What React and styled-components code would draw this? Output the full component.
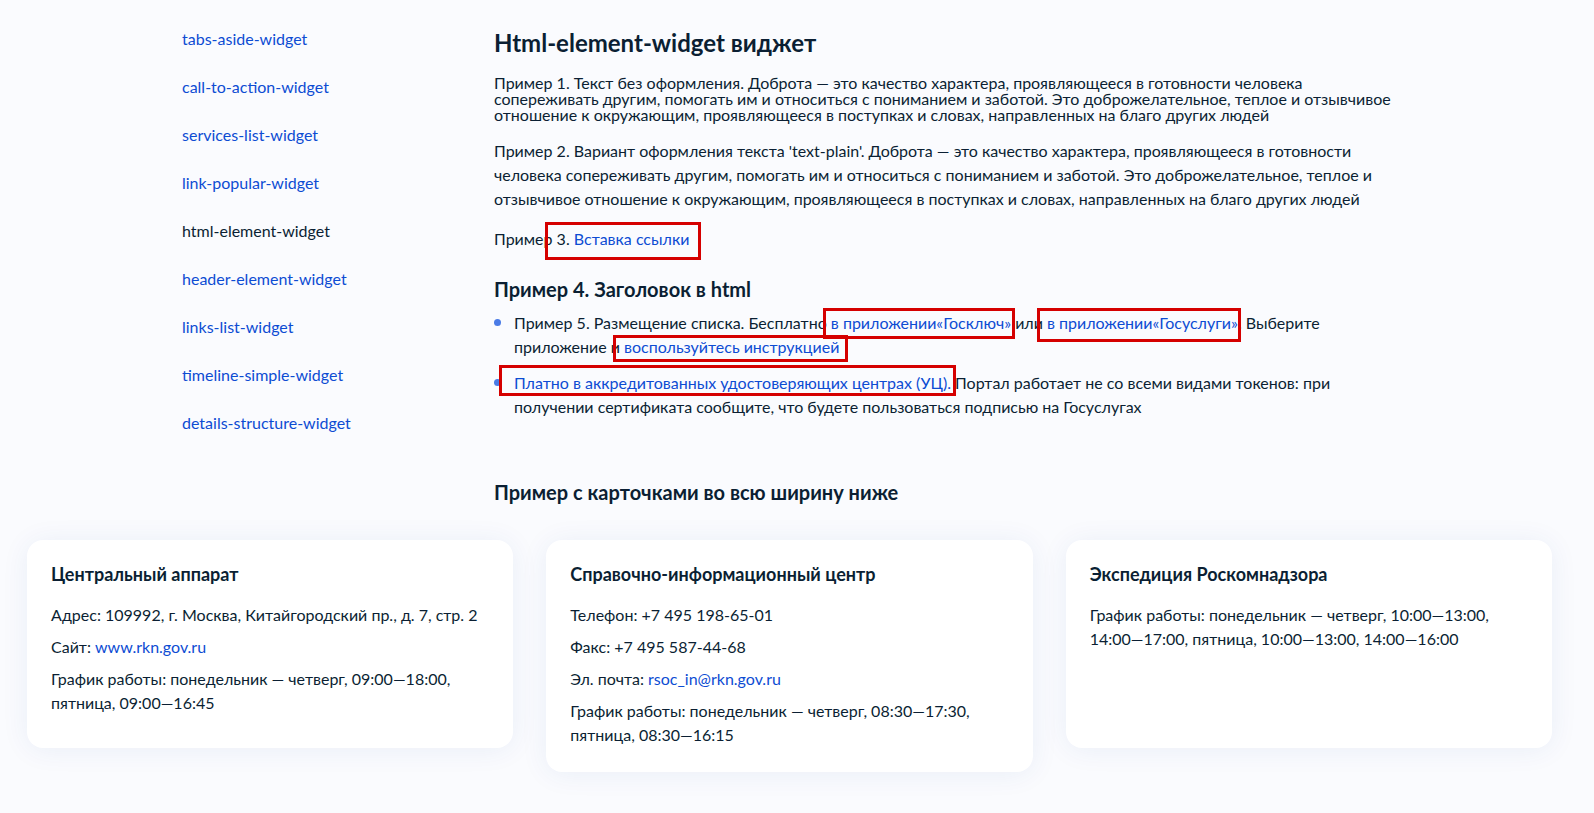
import React from 'react';
import styled, { createGlobalStyle } from 'styled-components';

const GlobalStyle = createGlobalStyle`
  body {
    margin: 0;
    background: #fafbfe;
    color: #0b1f33;
    font-family: Lato, "Noto Sans", sans-serif;
    font-size: 16px;
  }
  * { box-sizing: border-box; }
`;

const Page = styled.div`
  min-height: 100vh;
  padding-bottom: 40px;
`;

const Top = styled.div`
  display: grid;
  grid-template-columns: 312px 900px;
  padding: 27px 0 0 182px;
`;

const Sidebar = styled.nav`
  display: flex;
  flex-direction: column;
  gap: 24px;
`;

const SideLink = styled.a`
  font-size: 16px;
  line-height: 24px;
  color: ${(p) => (p.$active ? '#0b1f33' : '#0d4cd3')};
  text-decoration: none;
`;

const Main = styled.main`
  display: flex;
  flex-direction: column;
`;

const Title = styled.h1`
  margin: 0 0 16px;
  font-size: 24px;
  line-height: 32px;
  font-weight: 700;
`;

const Text = styled.p`
  margin: 0 0 16px;
  line-height: ${(p) => (p.$tight ? '16px' : '24px')};
`;

const Link = styled.a`
  color: #0d4cd3;
  text-decoration: none;
`;

const Marked = styled(Link)`
  position: relative;
  display: inline-block;
  &::after {
    content: '';
    position: absolute;
    top: ${(p) => p.$t}px;
    right: ${(p) => p.$r}px;
    bottom: ${(p) => p.$b}px;
    left: ${(p) => p.$l}px;
    border: 3px solid #d50000;
    pointer-events: none;
  }
`;

const SubTitle = styled.h4`
  margin: ${(p) => p.$top}px 0 ${(p) => p.$bottom}px;
  font-size: 20px;
  line-height: 28px;
  font-weight: 700;
`;

const List = styled.ul`
  margin: 0;
  padding: 0;
  list-style: none;
  display: flex;
  flex-direction: column;
  gap: 12px;
`;

const Item = styled.li`
  position: relative;
  padding-left: 20px;
  line-height: 24px;
  &::before {
    content: '';
    position: absolute;
    left: 0;
    top: 8px;
    width: 7px;
    height: 7px;
    border-radius: 50%;
    background: #4a7be6;
  }
`;

const Cards = styled.div`
  display: grid;
  grid-template-columns: repeat(3, 1fr);
  gap: 33px;
  align-items: start;
  width: 1525px;
  margin: 34px 0 0 27px;
`;

const Card = styled.section`
  background: #fff;
  border-radius: 16px;
  padding: 22px 24px 25px;
  min-height: 208px;
  box-shadow: 0 2px 28px rgba(30, 70, 160, 0.07);
`;

const CardTitle = styled.h5`
  margin: 0 0 17px;
  font-size: 18px;
  line-height: 24px;
  font-weight: 700;
`;

const CardText = styled.p`
  margin: 0 0 8px;
  line-height: 24px;
  &:last-child { margin-bottom: 0; }
`;

const nav = [
  'tabs-aside-widget',
  'call-to-action-widget',
  'services-list-widget',
  'link-popular-widget',
  'html-element-widget',
  'header-element-widget',
  'links-list-widget',
  'timeline-simple-widget',
  'details-structure-widget',
];

const kindness =
  'Доброта — это качество характера, проявляющееся в готовности человека сопереживать другим, помогать им и относиться с пониманием и заботой. Это доброжелательное, теплое и отзывчивое отношение к окружающим, проявляющееся в поступках и словах, направленных на благо других людей';

export default function App() {
  return (
    <Page>
      <GlobalStyle />
      <Top>
        <Sidebar>
          {nav.map((n) => (
            <SideLink key={n} href="#" $active={n === 'html-element-widget'}>
              {n}
            </SideLink>
          ))}
        </Sidebar>
        <Main>
          <Title>Html-element-widget виджет</Title>
          <Text $tight>Пример 1. Текст без оформления. {kindness}</Text>
          <Text>Пример 2. Вариант оформления текста 'text-plain'. {kindness}</Text>
          <Text>
            Пример 3.{' '}
            <Marked href="#" $t={-5} $r={-12} $b={-9} $l={-29}>
              Вставка ссылки
            </Marked>
          </Text>
          <SubTitle $top={8} $bottom={8}>Пример 4. Заголовок в html</SubTitle>
          <List>
            <Item>
              Пример 5. Размещение списка. Бесплатно{' '}
              <Marked href="#" $t={-3} $r={-4} $b={-4} $l={-8}>
                в приложении«Госключ»
              </Marked>{' '}
              или{' '}
              <Marked href="#" $t={-3} $r={-3} $b={-7} $l={-10}>
                в приложении«Госуслуги»
              </Marked>
              . Выберите приложение и{' '}
              <Marked href="#" $t={0} $r={-9} $b={-3} $l={-11}>
                воспользуйтесь инструкцией
              </Marked>
            </Item>
            <Item>
              <Marked href="#" $t={-6} $r={-5} $b={-1} $l={-15}>
                Платно в аккредитованных удостоверяющих центрах (УЦ).
              </Marked>{' '}
              Портал работает не со всеми видами токенов: при получении сертификата сообщите, что
              будете пользоваться подписью на Госуслугах
            </Item>
          </List>
          <SubTitle $top={59} $bottom={0}>Пример с карточками во всю ширину ниже</SubTitle>
        </Main>
      </Top>
      <Cards>
        <Card>
          <CardTitle>Центральный аппарат</CardTitle>
          <CardText>Адрес: 109992, г. Москва, Китайгородский пр., д. 7, стр. 2</CardText>
          <CardText>
            Сайт: <Link href="#">www.rkn.gov.ru</Link>
          </CardText>
          <CardText>График работы: понедельник — четверг, 09:00—18:00, пятница, 09:00—16:45</CardText>
        </Card>
        <Card>
          <CardTitle>Справочно-информационный центр</CardTitle>
          <CardText>Телефон: +7 495 198-65-01</CardText>
          <CardText>Факс: +7 495 587-44-68</CardText>
          <CardText>
            Эл. почта: <Link href="#">rsoc_in@rkn.gov.ru</Link>
          </CardText>
          <CardText>График работы: понедельник — четверг, 08:30—17:30, пятница, 08:30—16:15</CardText>
        </Card>
        <Card>
          <CardTitle>Экспедиция Роскомнадзора</CardTitle>
          <CardText>
            График работы: понедельник — четверг, 10:00—13:00, 14:00—17:00, пятница, 10:00—13:00,
            14:00—16:00
          </CardText>
        </Card>
      </Cards>
    </Page>
  );
}
